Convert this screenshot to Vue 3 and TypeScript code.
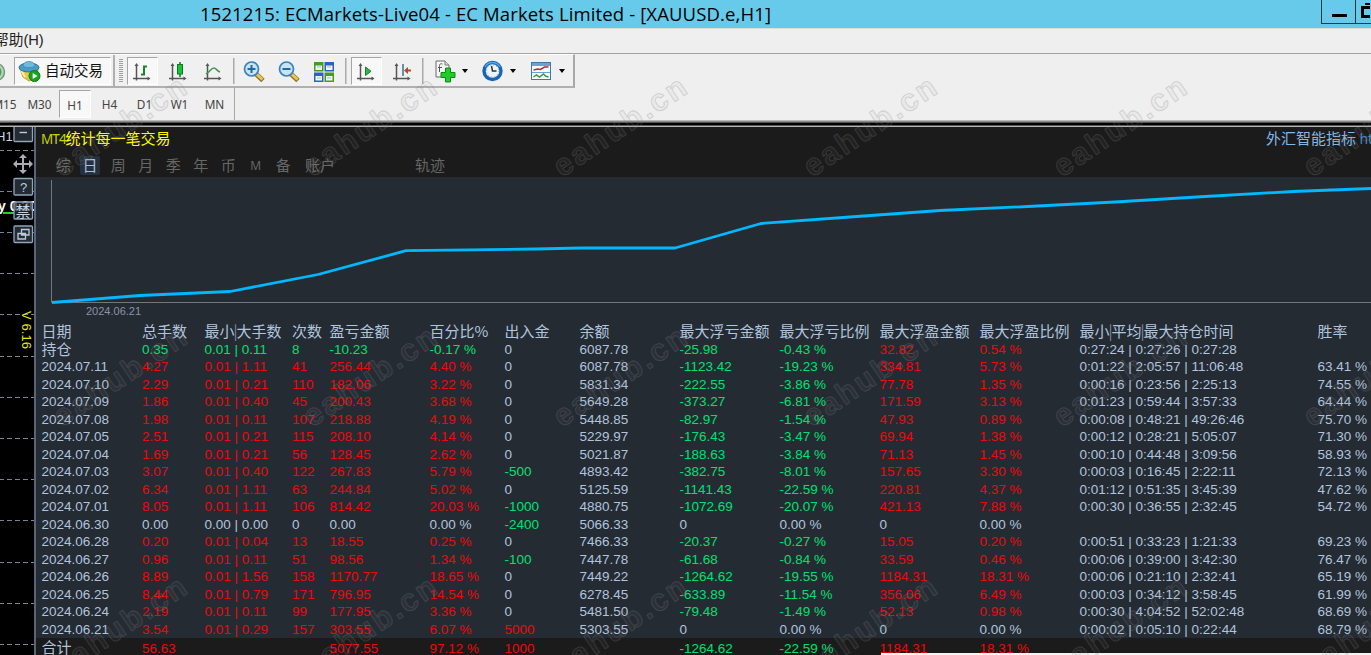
<script setup lang="ts">
type Row = string[]

const headers: string[] = ['日期', '总手数', '最小|大手数', '次数', '盈亏金额', '百分比%', '出入金', '余额', '最大浮亏金额', '最大浮亏比例', '最大浮盈金额', '最大浮盈比例', '最小|平均|最大持仓时间', '胜率']

const rows: Row[] = [
  ['持仓', '0.35', '0.01 | 0.11', '8', '-10.23', '-0.17 %', '0', '6087.78', '-25.98', '-0.43 %', '32.82', '0.54 %', '0:27:24 | 0:27:26 | 0:27:28', ''],
  ['2024.07.11', '4.27', '0.01 | 1.11', '41', '256.44', '4.40 %', '0', '6087.78', '-1123.42', '-19.23 %', '334.81', '5.73 %', '0:01:22 | 2:05:57 | 11:06:48', '63.41 %'],
  ['2024.07.10', '2.29', '0.01 | 0.21', '110', '182.06', '3.22 %', '0', '5831.34', '-222.55', '-3.86 %', '77.78', '1.35 %', '0:00:16 | 0:23:56 | 2:25:13', '74.55 %'],
  ['2024.07.09', '1.86', '0.01 | 0.40', '45', '200.43', '3.68 %', '0', '5649.28', '-373.27', '-6.81 %', '171.59', '3.13 %', '0:01:23 | 0:59:44 | 3:57:33', '64.44 %'],
  ['2024.07.08', '1.98', '0.01 | 0.11', '107', '218.88', '4.19 %', '0', '5448.85', '-82.97', '-1.54 %', '47.93', '0.89 %', '0:00:08 | 0:48:21 | 49:26:46', '75.70 %'],
  ['2024.07.05', '2.51', '0.01 | 0.21', '115', '208.10', '4.14 %', '0', '5229.97', '-176.43', '-3.47 %', '69.94', '1.38 %', '0:00:12 | 0:28:21 | 5:05:07', '71.30 %'],
  ['2024.07.04', '1.69', '0.01 | 0.21', '56', '128.45', '2.62 %', '0', '5021.87', '-188.63', '-3.84 %', '71.13', '1.45 %', '0:00:10 | 0:44:48 | 3:09:56', '58.93 %'],
  ['2024.07.03', '3.07', '0.01 | 0.40', '122', '267.83', '5.79 %', '-500', '4893.42', '-382.75', '-8.01 %', '157.65', '3.30 %', '0:00:03 | 0:16:45 | 2:22:11', '72.13 %'],
  ['2024.07.02', '6.34', '0.01 | 1.11', '63', '244.84', '5.02 %', '0', '5125.59', '-1141.43', '-22.59 %', '220.81', '4.37 %', '0:01:12 | 0:51:35 | 3:45:39', '47.62 %'],
  ['2024.07.01', '8.05', '0.01 | 1.11', '106', '814.42', '20.03 %', '-1000', '4880.75', '-1072.69', '-20.07 %', '421.13', '7.88 %', '0:00:30 | 0:36:55 | 2:32:45', '54.72 %'],
  ['2024.06.30', '0.00', '0.00 | 0.00', '0', '0.00', '0.00 %', '-2400', '5066.33', '0', '0.00 %', '0', '0.00 %', '', ''],
  ['2024.06.28', '0.20', '0.01 | 0.04', '13', '18.55', '0.25 %', '0', '7466.33', '-20.37', '-0.27 %', '15.05', '0.20 %', '0:00:51 | 0:33:23 | 1:21:33', '69.23 %'],
  ['2024.06.27', '0.96', '0.01 | 0.11', '51', '98.56', '1.34 %', '-100', '7447.78', '-61.68', '-0.84 %', '33.59', '0.46 %', '0:00:06 | 0:39:00 | 3:42:30', '76.47 %'],
  ['2024.06.26', '8.89', '0.01 | 1.56', '158', '1170.77', '18.65 %', '0', '7449.22', '-1264.62', '-19.55 %', '1184.31', '18.31 %', '0:00:06 | 0:21:10 | 2:32:41', '65.19 %'],
  ['2024.06.25', '8.44', '0.01 | 0.79', '171', '796.95', '14.54 %', '0', '6278.45', '-633.89', '-11.54 %', '356.06', '6.49 %', '0:00:03 | 0:34:12 | 3:58:45', '61.99 %'],
  ['2024.06.24', '2.19', '0.01 | 0.11', '99', '177.95', '3.36 %', '0', '5481.50', '-79.48', '-1.49 %', '52.13', '0.98 %', '0:00:30 | 4:04:52 | 52:02:48', '68.69 %'],
  ['2024.06.21', '3.54', '0.01 | 0.29', '157', '303.55', '6.07 %', '5000', '5303.55', '0', '0.00 %', '0', '0.00 %', '0:00:02 | 0:05:10 | 0:22:44', '68.79 %'],
]

const totals: Row = ['合计', '56.63', '', '', '5077.55', '97.12 %', '1000', '', '-1264.62', '-22.59 %', '1184.31', '18.31 %', '', '']

function tone(row: Row, col: number): string {
  const value = row[col]
  if (col === 0 || col === 7 || col >= 12) return 'plain'
  if (value.startsWith('-')) return 'green'
  if (row[0] === '持仓' && col < 6) return 'green'
  if (col < 6) return row[0] === '2024.06.30' ? 'plain' : 'red'
  return parseFloat(value) === 0 ? 'plain' : 'red'
}

const tabs: string[] = ['综', '日', '周', '月', '季', '年', '币', 'M', '备']
const frames: string[] = ['M15', 'M30', 'H1', 'H4', 'D1', 'W1', 'MN']
const gridLines: number[] = Array.from({ length: 13 }, (_, i) => Math.round(23.5 + i * 41.2))

const curve = '16,125.5 104,118.5 194,114.5 282,97.5 370,73.7 500,72 545,71 639,71 725,46.5 814,40 904,33.5 992,29.5 1079,25 1169,19.5 1257,14.5 1335,11.5'

const marks: { x: number; y: number }[] = [178, 428, 678].flatMap((y) =>
  [-188, 62, 312, 562, 812, 1062, 1312].map((x) => ({ x, y })),
)
</script>

<template>
  <div class="window">
    <header class="titlebar">
      <span class="title">1521215: ECMarkets-Live04 - EC Markets Limited - [XAUUSD.e,H1]</span>
      <div class="controls">
        <span class="ctl"><i class="min"></i></span>
        <span class="ctl"><svg width="14" height="22" viewBox="0 0 14 22"><path d="M9 4h9" stroke="#000" stroke-width="2" /><path d="M6.500 7.500h10v9h-10z" fill="none" stroke="#000" stroke-width="3" /></svg></span>
      </div>
    </header>
    <div class="menubar"><span>帮助(H)</span></div>

    <div class="toolbar">
      <div class="edge">
        <svg width="14" height="30" viewBox="0 0 14 30"><circle cx="-4" cy="16" r="8.5" fill="#b9d3b9" stroke="#6e9d78" stroke-width="1.5" /><path d="M-2 11a6 6 0 0 1 0 10" fill="none" stroke="#4c9d5b" stroke-width="1.5" /></svg>
      </div>
      <div class="autotrade pressed">
        <svg width="24" height="24" viewBox="0 0 24 24">
          <path d="M2 10l3 8 6 4 8-4 1-8z" fill="#e9c64f" stroke="#c79a2a" />
          <path d="M3 11l4 7" stroke="#fff2a8" stroke-width="2" />
          <ellipse cx="11" cy="8.5" rx="10" ry="4.5" fill="#4a9cc8" stroke="#2b7199" />
          <path d="M5 7c0-6 12-6 12 0-3 2-9 2-12 0z" fill="#70bce0" stroke="#3982aa" stroke-width=".7" />
          <circle cx="16.500" cy="17" r="5.500" fill="#13a51c" stroke="#0b7c12" />
          <path d="M14.700 14v6l4.800-3z" fill="#fff" />
        </svg>
        <span>自动交易</span>
      </div>
      <div class="divider"><i class="grip"></i></div>
      <div class="cell on"><svg width="20" height="20" viewBox="0 0 20 20"><path d="M4.500 3v15.500M1 16.500h16" class="axis" /><path d="M4.500 1l-2 3h4zM18.500 16.500l-3-2v4z" class="tip" /><path d="M9 12.500h3v-9M12 4.500h3" fill="none" stroke="#13872b" stroke-width="2" /></svg></div>
      <div class="cell"><svg width="20" height="20" viewBox="0 0 20 20"><path d="M4.500 3v15.500M1 16.500h16" class="axis" /><path d="M4.500 1l-2 3h4zM18.500 16.500l-3-2v4z" class="tip" /><path d="M12 0v15" stroke="#0c7a22" stroke-width="1.500" /><rect x="9.500" y="2.500" width="5" height="9.500" fill="#14c535" stroke="#0c7a22" /></svg></div>
      <div class="cell"><svg width="20" height="20" viewBox="0 0 20 20"><path d="M4.500 3v15.500M1 16.500h16" class="axis" /><path d="M4.500 1l-2 3h4zM18.500 16.500l-3-2v4z" class="tip" /><path d="M3 12c4-2 5-6 8-6 2 0 3 3 6 4" fill="none" stroke="#3b9b4a" stroke-width="1.500" /></svg></div>
      <div class="sep narrow"></div>
      <div v-for="kind in ['in', 'out']" :key="kind" class="cell">
        <svg width="24" height="24" viewBox="0 0 24 24">
          <path d="M14 14l7 6.500" stroke="#8e742b" stroke-width="5" /><path d="M14.500 14l6 5.500" stroke="#e8c656" stroke-width="3" />
          <circle cx="9.500" cy="9" r="7" fill="#c8e5f8" stroke="#3b82bd" stroke-width="1.700" />
          <path d="M5.500 9h8" stroke="#2368a0" stroke-width="2" /><path v-if="kind === 'in'" d="M9.500 5v8" stroke="#2368a0" stroke-width="2" />
        </svg>
      </div>
      <div class="cell"><svg width="22" height="22" viewBox="0 0 22 22">
        <path d="M1 1h9.500v9.500H1zM11.500 11.500H21V21h-9.500z" fill="#3f9f20" /><path d="M11.500 1H21v9.500h-9.500zM1 11.500h9.500V21H1z" fill="#2c5fc8" />
        <path d="M2.500 4.500h6.500v4.500H2.500zM13 4.500h6.500v4.500H13zM2.500 15h6.500v4.500H2.500zM13 15h6.500v4.500H13z" fill="#f2f8ee" />
        <path d="M4 6h4M14 6h4M4 17h4M14 17h4" stroke="#a8b8c8" />
      </svg></div>
      <div class="sep wide"></div>
      <div class="cell on"><svg width="20" height="20" viewBox="0 0 20 20"><path d="M4.500 3v15.500M1 16.500h16" class="axis" /><path d="M4.500 1l-2 3h4zM18.500 16.500l-3-2v4z" class="tip" /><path d="M9.500 5v8.500l5.500-4.200z" fill="#35b34b" stroke="#178331" /></svg></div>
      <div class="cell"><svg width="20" height="20" viewBox="0 0 20 20"><path d="M4.500 3v15.500M1 16.500h16" class="axis" /><path d="M4.500 1l-2 3h4zM18.500 16.500l-3-2v4z" class="tip" /><path d="M11 2v12" stroke="#4682a5" stroke-width="1.700" /><path d="M12 8.500l4-3.500v2.500h3v2h-3V12z" fill="#b94525" /></svg></div>
      <div class="sep mid"></div>
      <div class="drop"><svg width="24" height="24" viewBox="0 0 24 24"><path d="M3 2h9l4 4v12H3z" fill="#f7f7f7" stroke="#686868" /><path d="M12 2v4h4" fill="#ddd" stroke="#777" /><path d="M9.500 5c-3-1-3 1-3 3v5M5 8.500h4" fill="none" stroke="#555" /><path d="M12.500 9h5v4.500H22v5h-4.500V23h-5v-4.500H8v-5h4.500z" fill="#20cc28" stroke="#108a18" /></svg><i></i></div>
      <div class="drop"><svg width="24" height="24" viewBox="0 0 24 24"><circle cx="11.500" cy="12" r="8.500" fill="#eef4fa" stroke="#1765b4" stroke-width="3.400" /><path d="M4 8a8.500 8.500 0 0 1 15 0" fill="none" stroke="#55a8e8" stroke-width="1.300" /><path d="M10.500 7l1 5h4" fill="none" stroke="#333" stroke-width="1.500" /><circle cx="11.500" cy="12" r="6" fill="none" stroke="#8ba0b5" stroke-dasharray="1 2.140" /></svg><i></i></div>
      <div class="drop"><svg width="24" height="24" viewBox="0 0 24 24"><rect x="1.500" y="3.500" width="19" height="17" fill="#f8fbfd" stroke="#3e78a7" /><path d="M2 5.500h18" stroke="#6aa4d5" stroke-width="3" /><path d="M2 13.500h18" stroke="#6aa4d5" /><path d="M3.500 11l4-1 3 .5 4-2.500h4" fill="none" stroke="#a63528" stroke-width="1.500" /><path d="M3.500 18l3-2 3 2 4-3 2 2 3 1" fill="none" stroke="#3c9847" stroke-width="1.500" /></svg><i></i></div>
    </div>

    <div class="frames">
      <span v-for="f in frames" :key="f" :class="{ active: f === 'H1' }">{{ f }}</span>
    </div>

    <div class="edge-lines"></div>

    <main class="workspace">
      <aside class="side">
        <svg width="34" height="528" viewBox="0 0 34 528">
          <path v-for="y in gridLines" :key="y" :d="`M-1 ${y - 0.5}H34`" stroke="#74869a" stroke-dasharray="5 3" />
          <g class="side-text">
            <text x="-4" y="13.500" font-size="13" fill="#c5d5e6">H1</text>
            <text x="-2" y="84" font-size="14" font-weight="700" fill="#fff">y 0.20</text>
          </g>
          <path d="M3 86h11" stroke="#20d030" stroke-width="2" />
          <g fill="#252b33" stroke="#8fa4bd" stroke-width="1.300">
            <rect x="14" y="-1" width="18.500" height="15.500" rx="1" />
            <rect x="14" y="51.500" width="18.500" height="16.500" rx="1" />
            <rect x="14" y="75" width="18.500" height="17" rx="1" fill-opacity=".75" />
            <rect x="14" y="99" width="18.500" height="16.500" rx="1" />
          </g>
          <path d="M19.500 5.500h7.500" stroke="#b8cbe0" stroke-width="1.400" />
          <g fill="none" stroke="#a9adb1" stroke-width="2"><path d="M23 29v16M15 37h16" /></g>
          <path d="M23 27l-4 4h8zM23 47l-4-4h8zM13 37l4-4v8zM33 37l-4-4v8z" fill="#a9adb1" />
          <text x="23.500" y="64.500" text-anchor="middle" font-size="13" class="side-text" fill="#b8cbe0">?</text>
          <text x="23" y="89.500" text-anchor="middle" font-size="15" class="side-cjk" fill="#c5d5e6">禁</text>
          <path d="M21.500 102.500h7.500v5.500h-7.500zM18 106.500h7.500v5.500H18z" fill="#252b33" stroke="#b8cbe0" stroke-width="1.300" />
          <text transform="translate(21.500 184) rotate(90)" font-size="13" textLength="38" class="side-text" fill="#e8e800">V 6.16</text>
        </svg>
      </aside>

      <section class="panel">
        <div class="panel-head">
          <div class="head-line">
            <span class="name"><b>MT4</b>统计每一笔交易</span>
            <span class="brand">外汇智能指标 <b>https</b></span>
          </div>
          <nav class="tabs">
            <span v-for="t in tabs" :key="t" :class="{ picked: t === '日', latin: t === 'M' }">{{ t }}</span>
            <span class="account">账户</span>
            <span class="track">轨迹</span>
          </nav>
        </div>

        <div class="chart">
          <svg width="1335" height="127" viewBox="0 0 1335 127">
            <path d="M15.500 3v122.500H1335" fill="none" stroke="#73777c" />
            <polyline :points="curve" fill="none" stroke="#00b8ff" stroke-width="2.800" stroke-linejoin="round" />
          </svg>
          <div class="chart-date">2024.06.21</div>
        </div>

        <div class="grid heading">
          <span v-for="h in headers" :key="h"><template v-for="(part, i) in h.split('|')" :key="i"><i v-if="i" class="bar">|</i>{{ part }}</template></span>
        </div>
        <div v-for="r in rows" :key="r[0]" class="grid">
          <span v-for="(v, c) in r" :key="c" :class="[tone(r, c), { cjk: r[0] === '持仓' && c === 0 }]">{{ v }}</span>
        </div>
        <div class="grid total">
          <span v-for="(v, c) in totals" :key="c" :class="[tone(totals, c), { cjk: c === 0 }]">{{ v }}</span>
        </div>
      </section>
    </main>

    <div class="bottom-strip"></div>

    <svg class="watermark" width="1371" height="655" viewBox="0 0 1371 655">
      <text v-for="m in marks" :key="`${m.x}-${m.y}`" :transform="`translate(${m.x} ${m.y}) rotate(-34)`" textLength="153">eahub.cn</text>
    </svg>
  </div>
</template>

<style>
body {
  margin: 0;
  overflow: hidden;
}
</style>

<style scoped>
.window {
  position: relative;
  display: flex;
  flex-direction: column;
  width: 1371px;
  height: 655px;
  overflow: hidden;
  background: #efefef;
  font-family: "Liberation Sans", "Noto Sans CJK SC", sans-serif;
  white-space: nowrap;
}
svg { display: block; flex: none; }
.titlebar {
  display: flex;
  justify-content: space-between;
  flex: none;
  height: 28px;
  background: #67caea;
}
.title {
  padding-left: 200px;
  font: 18.500px/27px "Open Sans", "Noto Sans", sans-serif;
  letter-spacing: 0.13px;
  color: #000;
}
.controls { display: flex; width: 50px; height: 24px; }
.ctl {
  box-sizing: border-box;
  flex: none;
  width: 34px;
  border: 1px solid #243941;
  border-top: 0;
  border-right: 0;
}
.ctl + .ctl { width: 16px; }
.min { display: block; width: 15px; height: 3px; margin: 14px 0 0 10px; background: #000; }
.menubar {
  box-sizing: border-box;
  flex: none;
  height: 26px;
  border-top: 1px solid #d8dcde;
  border-bottom: 1px solid #a3a3a3;
  font: 14.700px/23px "Liberation Sans", "Noto Sans CJK SC", sans-serif;
  color: #222;
}
.menubar span { display: block; margin-left: -6px; }
.toolbar {
  box-sizing: border-box;
  display: flex;
  align-items: center;
  flex: none;
  width: 575px;
  height: 34px;
  border-top: 1px solid #fff;
  border-right: 2px solid #a8a8a8;
  border-bottom: 2px solid #b0b0b0;
  background: #f0f0f0;
}
.edge { width: 14px; }
.pressed, .cell.on {
  box-sizing: border-box;
  border: 1px solid #a5a5a5;
  border-right-color: #fff;
  border-bottom-color: #fff;
  background: #f8f8f8;
}
.autotrade {
  display: flex;
  align-items: center;
  width: 97px;
  height: 28px;
  padding-left: 3px;
  gap: 3px;
  font: 14.500px/24px "Noto Sans CJK SC", sans-serif;
  color: #111;
}
.autotrade span { height: 26px; }
.divider {
  box-sizing: border-box;
  width: 12px;
  height: 31px;
  margin: 0 1px 0 2px;
  border-left: 2px solid #b0b0b0;
  padding: 4px 0 0 4px;
}
.grip { display: block; width: 4px; height: 24px; background: repeating-linear-gradient(#a0a0a0 0 1px, #f0f0f0 1px 2px); }
.cell {
  display: flex;
  align-items: center;
  justify-content: center;
  flex: none;
  width: 35px;
  height: 28px;
  padding-top: 2px;
  box-sizing: border-box;
}
.cell.on { width: 31px; margin: 0 3px 0 1px; }
.axis { fill: none; stroke: #555; stroke-width: 1.500; }
.tip { fill: #555; }
.sep { flex: none; height: 26px; background: linear-gradient(#aaa, #aaa) 50% 0 / 1.500px 100% no-repeat; }
.sep.narrow { width: 6px; }
.sep.wide { width: 8px; }
.sep.mid { width: 7px; margin-right: 1px; }
.drop { display: flex; align-items: center; flex: none; width: 48.500px; padding-top: 1px; }
.drop svg { margin: 0 5px; }
.drop i { border: 3.500px solid transparent; border-top: 4px solid #000; border-bottom: 0; }
.frames {
  box-sizing: border-box;
  display: flex;
  align-items: center;
  flex: none;
  width: 235px;
  height: 32px;
  padding-left: 1px;
  border-right: 1px solid #a8a8a8;
  font: 11.800px/29px "Noto Sans", sans-serif;
  color: #444;
}
.frames span { box-sizing: border-box; flex: none; width: 35px; text-align: center; }
.frames span:first-child { margin-left: -14px; }
.frames span.active {
  width: 32px;
  height: 28px;
  margin: 0 1px 0 2px;
  border: 1px solid #a5a5a5;
  border-right-color: #fff;
  border-bottom-color: #fff;
  background: #f8f8f8;
  line-height: 28px;
}
.edge-lines {
  flex: none;
  height: 7px;
  background: linear-gradient(#bcbcbc 0 1px, #8a8a8a 1px 2px, #555 2px 3px, #000 3px 5px, #555 5px 6px, #b5b5b5 6px 7px);
}
.workspace { display: flex; flex: none; height: 528px; }
.side { flex: none; width: 34px; background: #000; overflow: hidden; }
.side-text { font-family: "Liberation Sans", sans-serif; }
.side-cjk { font-family: "Noto Sans CJK SC", sans-serif; }
.panel {
  flex: none;
  width: 1335px;
  overflow: hidden;
  border-left: 2px solid #56657a;
  background: #252b33;
}
.panel-head { height: 50px; background: #1b1b1b; }
.head-line {
  display: flex;
  justify-content: space-between;
  height: 23px;
  padding-left: 5px;
  font: 15px/21px "Noto Sans CJK SC", sans-serif;
}
.name { color: #ffff00; }
.name b { display: inline-block; width: 24.500px; font: 13.500px "Noto Sans", sans-serif; letter-spacing: -0.900px; color: #c8d400; }
.brand { flex: none; width: 105px; color: #80b8e8; overflow: hidden; }
.brand b { font: 14px "Noto Sans", sans-serif; color: #4a86c8; }
.tabs {
  display: flex;
  padding-left: 13.500px;
  font: 15px/20px "Noto Sans CJK SC", sans-serif;
  color: #666;
}
.tabs span { flex: none; width: 27.500px; height: 20px; padding-top: 5px; text-align: center; }
.tabs .picked {
  width: 20px;
  height: 19px;
  margin: 6px 4.500px 0 3px;
  padding: 0;
  border-radius: 2px;
  background: #253040;
  color: #a9c0da;
  line-height: 18px;
}
.tabs .latin { font: 12px/21px "Noto Sans", sans-serif; }
.tabs .account { width: 30px; margin-left: 8px; }
.tabs .track { width: 30px; margin-left: 80px; }
.chart { height: 146px; }
.chart-date { padding-left: 50px; font-size: 11px; line-height: 15px; color: #8795a6; }
.grid {
  display: grid;
  grid-template-columns: 100.500px 62.500px 87.500px 37.500px 100px 75px 75px 100px 100px 100px 100px 100px 238px 60px;
  height: 17.500px;
  padding-left: 5.500px;
  font-size: 13.500px;
  line-height: 17.500px;
  color: #b0c4de;
}
.grid span { min-width: 0; }
.heading { font: 15px/15.500px "Noto Sans CJK SC", sans-serif; }
.bar { display: inline-block; width: 2px; font-style: normal; text-indent: -1px; color: #7d8ca0; }
.cjk { font: 15px/15px "Noto Sans CJK SC", sans-serif; }
.red { color: #ea0a0e; }
.green { color: #00e070; }
.plain { color: #b0c4de; }
.total { height: 20px; line-height: 21px; background: #1b1b1b; }
.total .cjk { line-height: 18px; }
.bottom-strip { position: absolute; left: 881px; right: 0; bottom: 0; height: 2px; background: #f4f4f4; }
.watermark { position: absolute; inset: 0; pointer-events: none; }
.watermark text {
  font: 700 31px "Liberation Sans", sans-serif;
  fill: rgba(150, 150, 150, 0.08);
  stroke: rgba(128, 128, 128, 0.27);
  stroke-width: 1;
  stroke-linejoin: round;
}
</style>
